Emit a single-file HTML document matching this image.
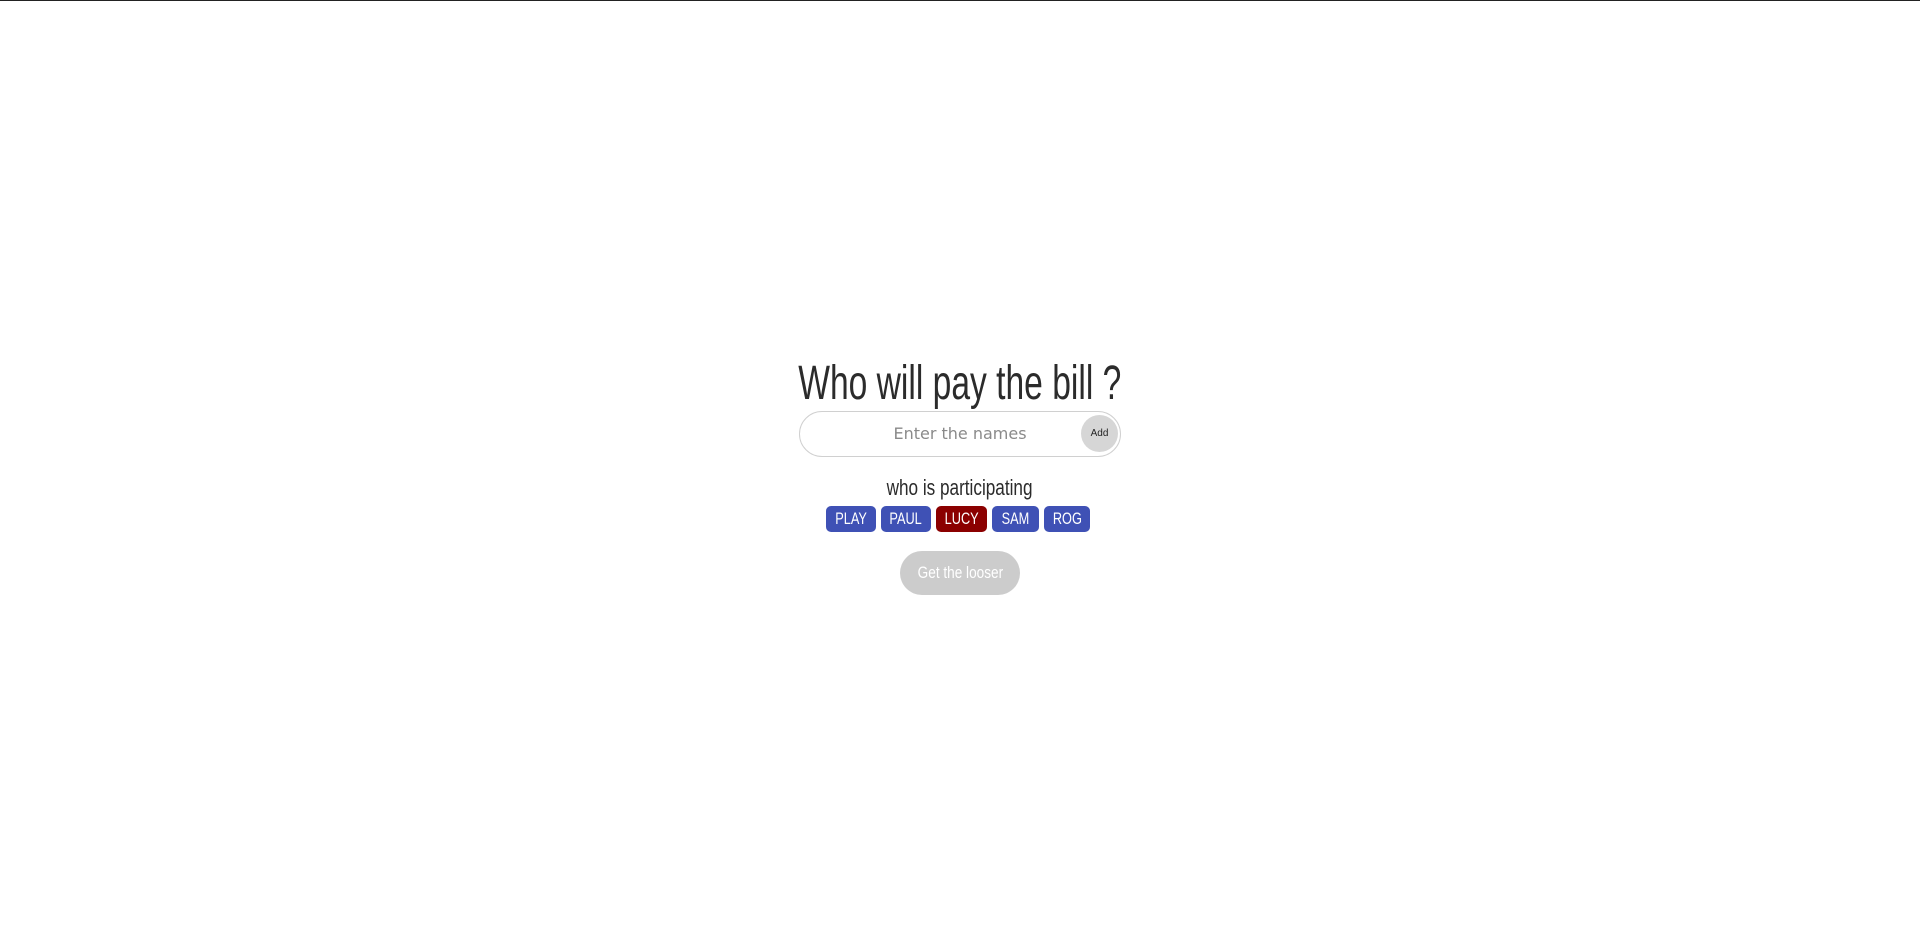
<!DOCTYPE html>
<html><head><style>
html,body{margin:0;padding:0;width:1920px;height:950px;background:#fff;overflow:hidden}
body{border-top:1px solid #222;box-sizing:border-box;position:relative;font-family:"Liberation Sans Narrow","Liberation Sans",sans-serif}
.c{position:absolute;left:0;width:1920px;text-align:center}
.sx{display:inline-block;transform:scaleX(0.8);transform-origin:center}
h1{margin:0;font-weight:normal;font-size:48px;color:#2b2b2b;top:355px;line-height:56px}
h1 .sx{transform:scaleX(0.7)}
.inp{position:absolute;left:799px;top:410px;width:320px;height:44px;border:1px solid #d0d0d0;border-radius:24px}
.ph{position:absolute;left:0;width:100%;top:0;line-height:44px;text-align:center;font-family:"DejaVu Sans",sans-serif;font-size:16px;color:#8a8a8a}
.add{position:absolute;left:281px;top:3px;width:37px;height:37px;border-radius:50%;background:#d6d6d6;font-size:10px;line-height:37px;text-align:center;color:#222;font-family:"Liberation Sans Narrow",sans-serif}
.sub{top:473px;font-size:22px;color:#2b2b2b;line-height:28px}
.sub .sx{transform:scaleX(0.78)}
.chip{position:absolute;top:505px;height:26px;border-radius:5px;background:#3f51b5;color:#fff;font-size:17px;line-height:26px;text-align:center}
.chip .sx{transform:scaleX(0.75)}
.btn{position:absolute;left:900px;top:550px;width:120px;height:44px;border-radius:22px;background:#cccccc;color:#fff;font-size:17px;line-height:44px;text-align:center}
</style></head><body>
<h1 class="c"><span class="sx">Who will pay the bill ?</span></h1>
<div class="inp"><div class="ph">Enter the names</div><div class="add">Add</div></div>
<div class="c sub"><span class="sx">who is participating</span></div>
<div class="chip" style="left:826px;width:50px"><span class="sx">PLAY</span></div>
<div class="chip" style="left:881px;width:50px"><span class="sx">PAUL</span></div>
<div class="chip" style="left:936px;width:51px;background:#8b0000"><span class="sx">LUCY</span></div>
<div class="chip" style="left:992px;width:47px"><span class="sx">SAM</span></div>
<div class="chip" style="left:1044px;width:46px"><span class="sx">ROG</span></div>
<div class="btn"><span class="sx">Get the looser</span></div>
</body></html>
